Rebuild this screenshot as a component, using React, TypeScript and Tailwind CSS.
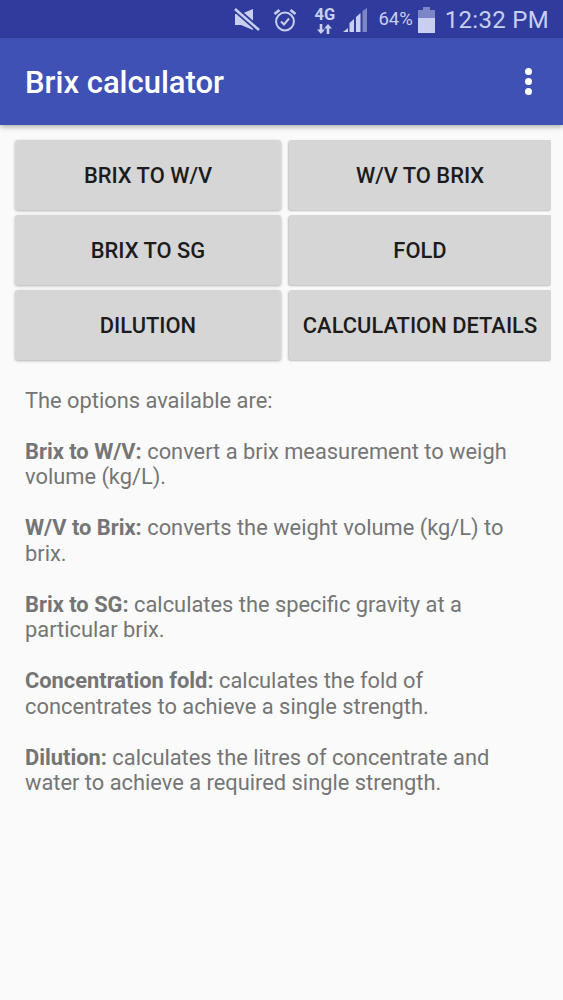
const buttons = ["BRIX TO W/V", "W/V TO BRIX", "BRIX TO SG", "FOLD", "DILUTION", "CALCULATION DETAILS"];

const options = [
  { name: "Brix to W/V:", text: "convert a brix measurement to weigh volume (kg/L)." },
  { name: "W/V to Brix:", text: "converts the weight volume (kg/L) to brix." },
  { name: "Brix to SG:", text: "calculates the specific gravity at a particular brix." },
  { name: "Concentration fold:", text: "calculates the fold of concentrates to achieve a single strength." },
  { name: "Dilution:", text: "calculates the litres of concentrate and water to achieve a required single strength." },
];

const StatusBar = () => (
  <div className="h-[38px] bg-[#2f3c9e] flex items-center justify-end pr-[14px] pt-[2px] text-[#c9cfee]">
    {/* mute */}
    <svg width="26" height="24" viewBox="0 0 26 24" className="mr-[13px]" fill="currentColor">
      <path d="M1 6h6l12-5v21L7 17H1z" />
      <path d="M0 0l25 22" stroke="#2f3c9e" strokeWidth="6" />
      <path d="M1 1l24 21" stroke="currentColor" strokeWidth="2.6" />
    </svg>
    {/* alarm */}
    <svg width="24" height="24" viewBox="0 0 24 24" className="mr-[17px]" fill="none" stroke="currentColor" strokeWidth="2">
      <circle cx="12" cy="13.5" r="8.9" />
      <path d="M8 13.500l3 3 5-6" />
      <path d="M1.500 6l5-4M22.500 6l-5-4" strokeWidth="2.8" />
    </svg>
    {/* 4G */}
    <div className="flex flex-col items-center w-[21px] mr-[8px]">
      <span className="text-[16.5px] leading-[15px] font-bold">4G</span>
      <svg width="15" height="10" viewBox="0 0 15 10" className="mt-[2px]" fill="currentColor">
        <path d="M4 10L0 5.500h2.700V0h2.600v5.500H8zM11 0l4 4.500h-2.700V10H9.700V4.500H7z" />
      </svg>
    </div>
    {/* signal */}
    <svg width="25" height="25" viewBox="0 0 25 25" className="mr-[10px]" fill="currentColor">
      <path d="M0 24l5-4v4zM6.500 24v-9l4.500-4v13zM13 24V9l4.500-4v19z" />
      <path d="M19.500 24V3L24 0v24z" opacity="0.5" />
    </svg>
    <span className="text-[18.5px] mr-[5px]">64%</span>
    {/* battery */}
    <svg width="17" height="26" viewBox="0 0 17 26" className="mr-[10px]" fill="currentColor">
      <path d="M5 0h7v3h5v8H0V3h5z" opacity="0.5" />
      <path d="M0 11h17v15H0z" />
    </svg>
    <span className="text-[24px] tracking-[0.3px]">12:32 PM</span>
  </div>
);

export default function App() {
  return (
    <div className="min-h-[1000px] bg-[#fafafa] font-['Roboto',sans-serif]">
      <StatusBar />
      <div className="h-[87px] bg-[#3f51b5] flex items-center justify-between pl-[25px] pr-[31px] shadow-[0_2px_5px_rgba(0,0,0,0.3)]">
        <span className="text-white text-[31px] font-medium pt-[3px]">Brix calculator</span>
        <div className="flex flex-col gap-[3px]">
          <span className="w-[7px] h-[7px] rounded-full bg-white" />
          <span className="w-[7px] h-[7px] rounded-full bg-white" />
          <span className="w-[7px] h-[7px] rounded-full bg-white" />
        </div>
      </div>

      <div className="grid grid-cols-[266px_262px] gap-x-[8px] gap-y-[5px] pl-[15px] pt-[15px]">
        {buttons.map((label, i) => (
          <button
            key={label}
            className={
              i % 2 === 1
                ? "h-[70px] pt-[2px] rounded-l-[3px] bg-[#d6d6d6] text-[#1c1c1c] text-[21.9px] font-medium shadow-[-1px_1px_2px_rgba(0,0,0,0.25)]"
                : "h-[70px] pt-[2px] rounded-[3px] bg-[#d6d6d6] text-[#1c1c1c] text-[21.9px] font-medium shadow-[0_1px_3px_rgba(0,0,0,0.3)]"
            }
          >
            {label}
          </button>
        ))}
      </div>

      <div className="pl-[25px] pr-[40px] pt-[28px] text-[21.85px] leading-[25.5px] text-[#757575]">
        <p className="mb-[25px]">The options available are:</p>
        {options.map((o) => (
          <p key={o.name} className="mb-[25.5px]">
            <b className="font-bold">{o.name}</b> {o.text}
          </p>
        ))}
      </div>
    </div>
  );
}
